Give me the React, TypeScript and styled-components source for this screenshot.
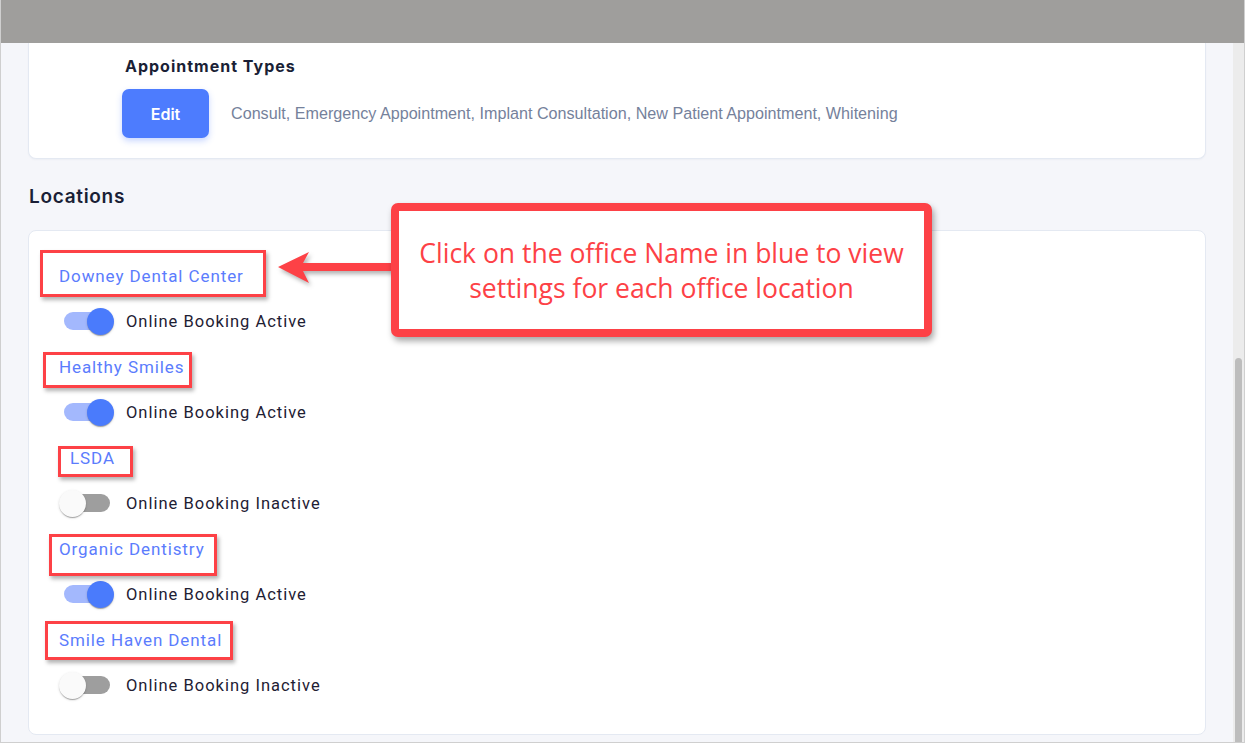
import React from "react";
import styled, { createGlobalStyle } from "styled-components";

const GlobalStyle = createGlobalStyle`
  html, body { margin: 0; padding: 0; background: #ffffff; }
  * { box-sizing: border-box; }
`;

const RED = "#fd4146";

const Frame = styled.div`
  position: relative;
  width: 1245px;
  height: 743px;
  border-left: 1px solid #cfcfcf;
  border-right: 1px solid #cfcfcf;
  border-bottom: 1px solid #cfcfcf;
  display: flex;
  flex-direction: column;
  overflow: hidden;
`;

const TopBar = styled.div`
  height: 43px;
  flex: none;
  background: #9f9e9c;
`;

const Body = styled.div`
  flex: 1;
  display: flex;
  min-height: 0;
`;

const Main = styled.main`
  flex: 1;
  background: #f5f6fa;
  padding: 0 27px 0 27px;
  display: flex;
  flex-direction: column;
`;

const ScrollTrack = styled.div`
  width: 11px;
  flex: none;
  background: #ececec;
  padding: 315px 2px 0 2px;
`;

const ScrollThumb = styled.div`
  height: 390px;
  border-radius: 4px;
  background: #bdbdbd;
`;

const TopCard = styled.section`
  background: #ffffff;
  border: 1px solid #e4e9f2;
  border-top: none;
  border-radius: 0 0 8px 8px;
  padding: 13px 0 20px 93px;
  box-shadow: 0 1px 2px rgba(30, 50, 90, 0.04);
`;

const CardHeading = styled.h3`
  margin: 0 0 13px 3px;
  font-family: Inter, "Noto Sans", sans-serif;
  font-size: 16px;
  line-height: 20px;
  font-weight: 700;
  letter-spacing: 1px;
  color: #1a1f36;
`;

const TypesRow = styled.div`
  display: flex;
  align-items: center;
  gap: 22px;
`;

const EditButton = styled.button`
  width: 87px;
  height: 49px;
  border: none;
  border-radius: 7px;
  background: #4d7cfe;
  color: #ffffff;
  font-family: Inter, "Noto Sans", sans-serif;
  font-weight: 600;
  font-size: 16px;
  box-shadow: 0 3px 6px rgba(77, 124, 254, 0.3);
  cursor: pointer;
`;

const TypesText = styled.span`
  font-family: "Liberation Sans", Arial, sans-serif;
  font-size: 16.15px;
  color: #75819b;
`;

const SectionTitle = styled.h2`
  margin: 26px 0 21px 1px;
  font-family: Inter, "Noto Sans", sans-serif;
  font-size: 19px;
  line-height: 24px;
  font-weight: 600;
  letter-spacing: 0.7px;
  color: #1a1f36;
`;

const LocationsCard = styled.section`
  background: #ffffff;
  border: 1px solid #e4e9f2;
  border-radius: 8px;
  padding: 34px 0 27px 30px;
  display: flex;
  flex-direction: column;
  gap: 13px;
`;

const LocationItem = styled.div`
  display: flex;
  flex-direction: column;
  gap: 12px;
`;

const LocationName = styled.a<{ $indent?: number }>`
  display: block;
  padding-left: ${(p) => p.$indent ?? 0}px;
  font-family: Roboto, "Noto Sans", sans-serif;
  font-size: 17px;
  line-height: 22px;
  letter-spacing: 0.9px;
  color: #5b7cfd;
  text-decoration: none;
  cursor: pointer;
`;

const SwitchRow = styled.label`
  height: 44px;
  display: flex;
  align-items: center;
  gap: 12px;
  cursor: pointer;
`;

const SwitchBox = styled.span<{ $on: boolean }>`
  position: relative;
  width: 55px;
  height: 27px;
  display: flex;
  align-items: center;
  justify-content: ${(p) => (p.$on ? "flex-end" : "flex-start")};
`;

const Track = styled.span<{ $on: boolean }>`
  position: absolute;
  left: 5px;
  top: 4.5px;
  width: 46px;
  height: 18px;
  border-radius: 9px;
  background: ${(p) => (p.$on ? "#a3b8fd" : "#9e9e9e")};
`;

const Thumb = styled.span<{ $on: boolean }>`
  position: relative;
  width: 27px;
  height: 27px;
  border-radius: 50%;
  background: ${(p) => (p.$on ? "#4a7bfc" : "#fafafa")};
  box-shadow: 0 2px 1px -1px rgba(0, 0, 0, 0.2), 0 1px 1px 0 rgba(0, 0, 0, 0.14),
    0 1px 3px 0 rgba(0, 0, 0, 0.12);
`;

const SwitchLabel = styled.span`
  font-family: Roboto, "Noto Sans", sans-serif;
  font-size: 16.5px;
  letter-spacing: 1px;
  color: #1e2033;
`;

const MarkBox = styled.div`
  position: absolute;
  border: 3px solid ${RED};
  box-shadow: 2px 3px 4px rgba(0, 0, 0, 0.3);
  pointer-events: none;
`;

const Callout = styled.div`
  position: absolute;
  left: 390px;
  top: 203px;
  width: 541px;
  height: 134px;
  border: 8px solid ${RED};
  border-radius: 7px;
  background: #ffffff;
  box-shadow: 2px 4px 6px rgba(0, 0, 0, 0.35);
  display: flex;
  align-items: center;
  justify-content: center;
  text-align: center;
  font-family: "Open Sans", "Noto Sans", sans-serif;
  font-size: 26.5px;
  line-height: 35px;
  padding-top: 2px;
  color: ${RED};
  white-space: nowrap;
`;

const ArrowSvg = styled.svg`
  position: absolute;
  left: 269px;
  top: 244px;
  overflow: visible;
  filter: drop-shadow(2px 3px 2px rgba(0, 0, 0, 0.3));
`;

type Loc = { name: string; on: boolean; indent?: number };

const locations: Loc[] = [
  { name: "Downey Dental Center", on: true },
  { name: "Healthy Smiles", on: true },
  { name: "LSDA", on: false, indent: 11 },
  { name: "Organic Dentistry", on: true },
  { name: "Smile Haven Dental", on: false },
];

const marks = [
  { x: 40, y: 250, w: 226, h: 47 },
  { x: 43, y: 352, w: 149, h: 36 },
  { x: 58, y: 446, w: 75, h: 31 },
  { x: 49, y: 534, w: 168, h: 42 },
  { x: 45, y: 621, w: 188, h: 39 },
];

export default function App() {
  return (
    <>
      <GlobalStyle />
      <Frame>
        <TopBar />
        <Body>
          <Main>
            <TopCard>
              <CardHeading>Appointment Types</CardHeading>
              <TypesRow>
                <EditButton>Edit</EditButton>
                <TypesText>
                  Consult, Emergency Appointment, Implant Consultation, New Patient Appointment, Whitening
                </TypesText>
              </TypesRow>
            </TopCard>
            <SectionTitle>Locations</SectionTitle>
            <LocationsCard>
              {locations.map((l) => (
                <LocationItem key={l.name}>
                  <LocationName $indent={l.indent}>{l.name}</LocationName>
                  <SwitchRow>
                    <SwitchBox $on={l.on}>
                      <Track $on={l.on} />
                      <Thumb $on={l.on} />
                    </SwitchBox>
                    <SwitchLabel>
                      {l.on ? "Online Booking Active" : "Online Booking Inactive"}
                    </SwitchLabel>
                  </SwitchRow>
                </LocationItem>
              ))}
            </LocationsCard>
          </Main>
          <ScrollTrack>
            <ScrollThumb />
          </ScrollTrack>
        </Body>
        {marks.map((m, i) => (
          <MarkBox
            key={i}
            style={{ left: m.x - 1, top: m.y, width: m.w, height: m.h }}
          />
        ))}
        <ArrowSvg width="130" height="45" viewBox="269 244 130 45">
          <polygon
            points="277,267 308,252 302,263 396,263 396,271 302,271 308,283"
            fill={RED}
          />
        </ArrowSvg>
        <Callout>
          Click on the office Name in blue to view
          <br />
          settings for each office location
        </Callout>
      </Frame>
    </>
  );
}
